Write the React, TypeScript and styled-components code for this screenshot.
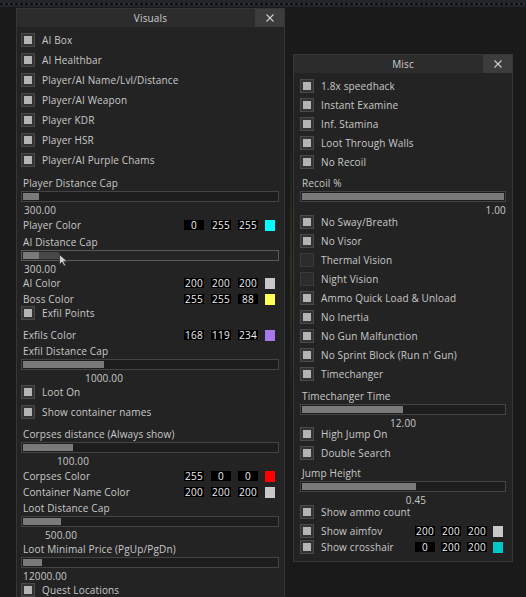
import React from "react";
import styled, { createGlobalStyle } from "styled-components";

const GlobalStyle = createGlobalStyle`
  html, body { margin: 0; padding: 0; background: #1a1a1a; overflow: hidden; }
  #root { width: 526px; height: 597px; }
`;

const Desktop = styled.div`
  position: relative;
  width: 526px;
  height: 597px;
  overflow: hidden;
  background: #1a1a1a;
  font-family: "Open Sans", "Noto Sans", sans-serif;
  font-size: 10px;
  letter-spacing: 0.15px;
  color: #c9c9c9;
`;

const TopStrip = styled.div`
  height: 7px;
  background: repeating-linear-gradient(90deg, #0f1012 0 3px, #30333a 3px 5px) 0 3px / 100% 2px no-repeat, #22252a;
`;

const Window = styled.section<{ $x: number; $y: number; $w: number; $h: number; $glow?: boolean }>`
  position: absolute;
  left: ${(p) => p.$x}px;
  top: ${(p) => p.$y}px;
  width: ${(p) => p.$w}px;
  height: ${(p) => p.$h}px;
  box-sizing: border-box;
  border: 1px solid #363636;
  background: #232323;
  display: flex;
  flex-direction: column;
  &::before {
    content: "";
    display: ${(p) => (p.$glow ? "block" : "none")};
    position: absolute;
    left: -4px;
    top: 40px;
    width: 2px;
    height: 340px;
    background: linear-gradient(to bottom, rgba(60, 90, 30, 0), rgba(70, 100, 40, 0.35), rgba(60, 90, 30, 0));
  }
`;

const TitleBar = styled.header`
  flex: none;
  height: 18px;
  display: grid;
  grid-template-columns: 29px 1fr 29px;
  background: #2c2c2c;
`;

const Title = styled.div`
  grid-column: 2;
  text-align: center;
  line-height: 18px;
  color: #cccccc;
`;

const CloseBtn = styled.div`
  grid-column: 3;
  background: #3c3c3c;
  display: flex;
  align-items: center;
  justify-content: center;
`;

const Body = styled.div<{ $pl: number; $pr: number }>`
  padding: 0 ${(p) => p.$pr}px 0 ${(p) => p.$pl}px;
  display: flex;
  flex-direction: column;
`;

const CheckRow = styled.div<{ $mt: number }>`
  margin-top: ${(p) => p.$mt}px;
  height: 14px;
  display: flex;
  align-items: center;
  gap: 7px;
  white-space: nowrap;
`;

const Box = styled.span<{ $on: boolean }>`
  flex: none;
  width: 14px;
  height: 14px;
  box-sizing: border-box;
  border: 1px solid ${(p) => (p.$on ? "#4a4a4a" : "#3a3a3a")};
  background: ${(p) => (p.$on ? "#333333" : "#2c2c2c")};
  display: flex;
  align-items: center;
  justify-content: center;
  &::after {
    content: "";
    display: ${(p) => (p.$on ? "block" : "none")};
    width: 8px;
    height: 8px;
    background: #b4b4b4;
  }
`;

const SliderBlock = styled.div<{ $mt: number }>`
  margin-top: ${(p) => p.$mt}px;
  display: flex;
  flex-direction: column;
`;

const SliderLabel = styled.div`
  height: 12px;
  line-height: 12px;
  padding-left: 2px;
  white-space: nowrap;
`;

const Track = styled.div<{ $hover?: boolean }>`
  margin-top: 2px;
  height: 11px;
  box-sizing: border-box;
  border: 1px solid ${(p) => (p.$hover ? "#5a5a5a" : "#444444")};
  background: ${(p) => (p.$hover ? "#252525" : "#1d1d1d")};
  padding: 1px;
  display: flex;
`;

const Fill = styled.div`
  flex: none;
  height: 100%;
  background: #7a7a7a;
`;

const HoverSeg = styled.div`
  flex: none;
  height: 100%;
  background: #484848;
`;

const ValueRow = styled.div<{ $end: boolean }>`
  margin-top: 3px;
  height: 10px;
  line-height: 10px;
  display: flex;
  justify-content: ${(p) => (p.$end ? "flex-end" : "flex-start")};
`;

const ValueSpacer = styled.div`
  flex: none;
`;

const ValueText = styled.div<{ $end: boolean }>`
  width: ${(p) => (p.$end ? "auto" : "0")};
  display: flex;
  justify-content: center;
  white-space: nowrap;
`;

const ColorRow = styled.div<{ $mt: number }>`
  margin-top: ${(p) => p.$mt}px;
  height: 12px;
  display: flex;
  align-items: center;
  padding-left: 2px;
  white-space: nowrap;
`;

const ColorInputs = styled.div<{ $gap: number; $pr: number }>`
  margin-left: auto;
  padding-right: ${(p) => p.$pr}px;
  display: flex;
  align-items: center;
  gap: ${(p) => p.$gap}px;
`;

const NumBox = styled.span`
  width: 20px;
  height: 10px;
  background: #000;
  color: #eeeeee;
  line-height: 10px;
  text-align: center;
  letter-spacing: 0.3px;
`;

const Swatch = styled.span<{ $c: string }>`
  width: 10px;
  height: 11px;
  background: ${(p) => p.$c};
`;

const Cursor = styled.svg`
  position: absolute;
  left: 59px;
  top: 254px;
`;

const CloseIcon = () => (
  <svg width="8" height="8" viewBox="0 0 8 8">
    <path d="M0.5 0.5 L7.5 7.5 M7.5 0.5 L0.5 7.5" stroke="#cfcfcf" strokeWidth="1.1" />
  </svg>
);

const Check = ({ label, mt, on = true, children }: { label: string; mt: number; on?: boolean; children?: React.ReactNode }) => (
  <CheckRow $mt={mt}>
    <Box $on={on} />
    <span>{label}</span>
    {children}
  </CheckRow>
);

const Slider = ({ label, mt, f, value, hover }: { label: string; mt: number; f: number; value: string; hover?: number }) => {
  const end = f >= 0.97;
  const half = Math.round(value.length * 2.75) + 2;
  return (
    <SliderBlock $mt={mt}>
      <SliderLabel>{label}</SliderLabel>
      <Track $hover={hover !== undefined}>
        <Fill style={{ width: `${f * 100}%` }} />
        {hover !== undefined && <HoverSeg style={{ width: `${hover * 100}%` }} />}
      </Track>
      <ValueRow $end={end}>
        {!end && <ValueSpacer style={{ width: `max(${half}px, calc(2px + ${f} * (100% - 4px)))` }} />}
        <ValueText $end={end}>{value}</ValueText>
      </ValueRow>
    </SliderBlock>
  );
};

const Inputs = ({ v, c, gap = 7, pr = 4 }: { v: [number, number, number]; c: string; gap?: number; pr?: number }) => (
  <ColorInputs $gap={gap} $pr={pr}>
    {v.map((n, i) => (
      <NumBox key={i}>{n}</NumBox>
    ))}
    <Swatch $c={c} />
  </ColorInputs>
);

const Color = ({ label, mt, v, c }: { label: string; mt: number; v: [number, number, number]; c: string }) => (
  <ColorRow $mt={mt}>
    <span>{label}</span>
    <Inputs v={v} c={c} />
  </ColorRow>
);

export default function App() {
  return (
    <>
      <GlobalStyle />
      <Desktop>
        <TopStrip />
        <Window $x={16} $y={8} $w={269} $h={620}>
          <TitleBar>
            <Title>Visuals</Title>
            <CloseBtn>
              <CloseIcon />
            </CloseBtn>
          </TitleBar>
          <Body $pl={4} $pr={5}>
            <Check label="AI Box" mt={6} />
            <Check label="AI Healthbar" mt={6} />
            <Check label="Player/AI Name/Lvl/Distance" mt={6} />
            <Check label="Player/AI Weapon" mt={6} />
            <Check label="Player KDR" mt={6} />
            <Check label="Player HSR" mt={6} />
            <Check label="Player/AI Purple Chams" mt={6} />
            <Slider label="Player Distance Cap" mt={10} f={16 / 254} value="300.00" />
            <Color label="Player Color" mt={4} v={[0, 255, 255]} c="#00ffff" />
            <Slider label="AI Distance Cap" mt={5} f={16 / 254} value="300.00" hover={20 / 254} />
            <Color label="AI Color" mt={3} v={[200, 200, 200]} c="#c8c8c8" />
            <Color label="Boss Color" mt={4} v={[255, 255, 88]} c="#ffff58" />
            <Check label="Exfil Points" mt={1} />
            <Color label="Exfils Color" mt={9} v={[168, 119, 234]} c="#a877ea" />
            <Slider label="Exfil Distance Cap" mt={4} f={81 / 254} value="1000.00" />
            <Check label="Loot On" mt={2} />
            <Check label="Show container names" mt={6} />
            <Slider label="Corpses distance (Always show)" mt={9} f={50 / 254} value="100.00" />
            <Color label="Corpses Color" mt={4} v={[255, 0, 0]} c="#ff0000" />
            <Color label="Container Name Color" mt={4} v={[200, 200, 200]} c="#c8c8c8" />
            <Slider label="Loot Distance Cap" mt={4} f={38 / 254} value="500.00" />
            <Slider label="Loot Minimal Price (PgUp/PgDn)" mt={3} f={19 / 254} value="12000.00" />
            <Check label="Quest Locations" mt={2} />
          </Body>
        </Window>

        <Window $x={293} $y={54} $w={220} $h={508} $glow>
          <TitleBar>
            <Title>Misc</Title>
            <CloseBtn>
              <CloseIcon />
            </CloseBtn>
          </TitleBar>
          <Body $pl={6} $pr={6}>
            <Check label="1.8x speedhack" mt={6} />
            <Check label="Instant Examine" mt={5} />
            <Check label="Inf. Stamina" mt={5} />
            <Check label="Loot Through Walls" mt={5} />
            <Check label="No Recoil" mt={5} />
            <Slider label="Recoil %" mt={8} f={1} value="1.00" />
            <Check label="No Sway/Breath" mt={0} />
            <Check label="No Visor" mt={5} />
            <Check label="Thermal Vision" mt={5} on={false} />
            <Check label="Night Vision" mt={5} on={false} />
            <Check label="Ammo Quick Load & Unload" mt={5} />
            <Check label="No Inertia" mt={5} />
            <Check label="No Gun Malfunction" mt={5} />
            <Check label="No Sprint Block (Run n' Gun)" mt={5} />
            <Check label="Timechanger" mt={5} />
            <Slider label="Timechanger Time" mt={9} f={0.5} value="12.00" />
            <Check label="High Jump On" mt={-1} />
            <Check label="Double Search" mt={5} />
            <Slider label="Jump Height" mt={7} f={114 / 202} value="0.45" />
            <Check label="Show ammo count" mt={0} />
            <Check label="Show aimfov" mt={5}>
              <Inputs v={[200, 200, 200]} c="#c8c8c8" gap={6} pr={3} />
            </Check>
            <Check label="Show crosshair" mt={2}>
              <Inputs v={[0, 200, 200]} c="#00c8c8" gap={6} pr={3} />
            </Check>
          </Body>
        </Window>

        <Cursor width="10" height="13" viewBox="0 0 10 13">
          <path d="M0.5 0.5 L0.5 10.5 L3 8 L5 12 L6.6 11.2 L4.7 7.4 L8.2 7.4 Z" fill="#cfcfcf" stroke="#303030" strokeWidth="0.8" />
        </Cursor>
      </Desktop>
    </>
  );
}
